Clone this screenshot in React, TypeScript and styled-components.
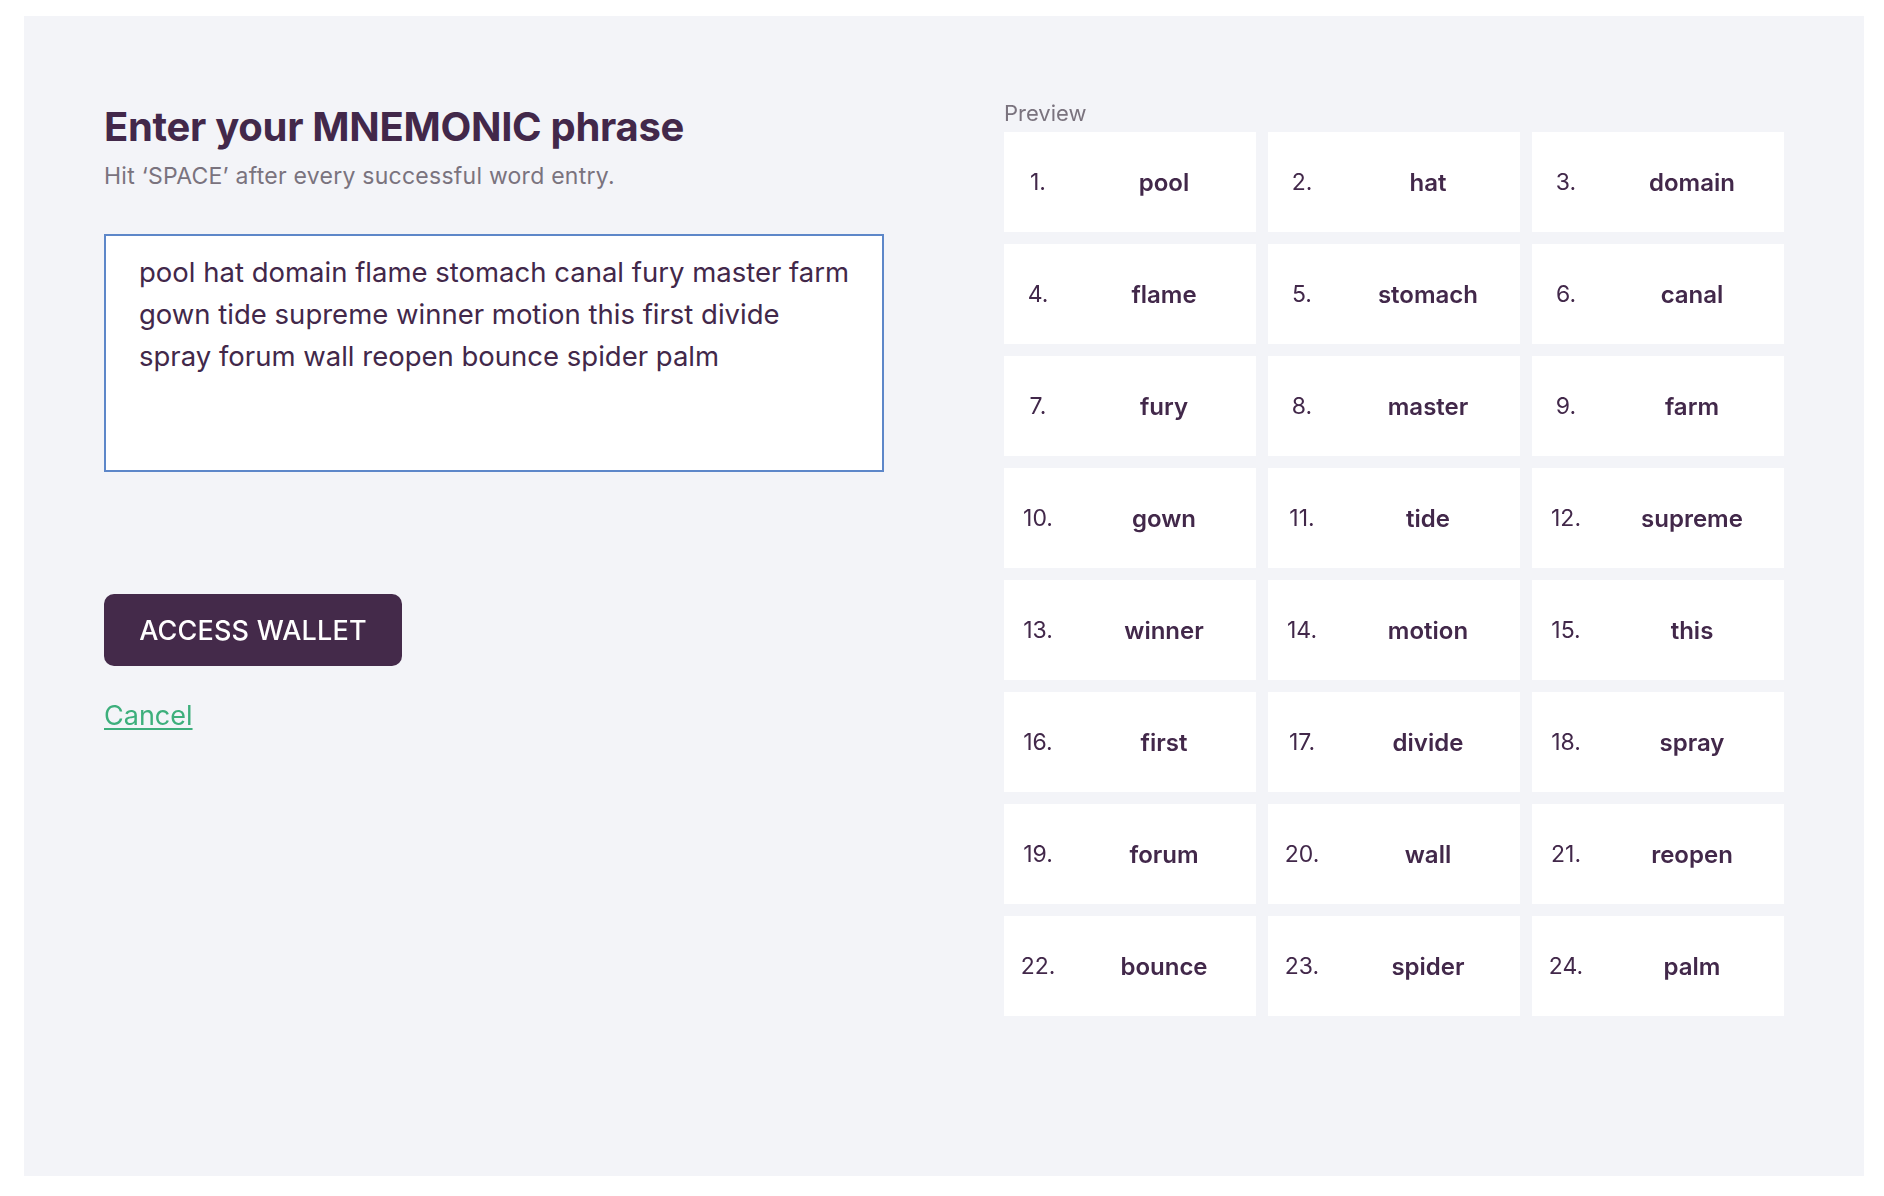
import React, { useEffect, useRef } from "react";
import styled, { createGlobalStyle } from "styled-components";

const GlobalStyle = createGlobalStyle`
  * { box-sizing: border-box; }
  html, body { margin: 0; padding: 0; background: #ffffff; }
  body { font-family: Inter, "Noto Sans", sans-serif; color: #42284a; }
`;

const Page = styled.div`
  padding: 16px 20px 20px 24px;
`;

const Panel = styled.main`
  height: 1160px;
  background: #f3f4f8;
  padding: 66px 80px 0 80px;
  display: grid;
  grid-template-columns: 780px 780px;
  column-gap: 120px;
  align-items: start;
`;

const LeftColumn = styled.section`
  display: flex;
  flex-direction: column;
  align-items: flex-start;
`;

const Title = styled.h1`
  margin: 21px 0 0 0;
  font-size: 40px;
  line-height: 48px;
  font-weight: 700;
  letter-spacing: -0.3px;
  color: #42284a;
`;

const Subtitle = styled.p`
  margin: 11px 0 0 0;
  font-size: 23px;
  line-height: 28px;
  font-weight: 400;
  letter-spacing: 0.25px;
  color: #7a737e;
`;

const PhraseInput = styled.textarea`
  margin-top: 44px;
  width: 780px;
  height: 238px;
  resize: none;
  border: 2px solid #5d87c9;
  border-radius: 0;
  background: #ffffff;
  padding: 15px 28px 15px 33px;
  font-family: Inter, "Noto Sans", sans-serif;
  font-size: 27.5px;
  line-height: 42px;
  color: #42284a;
  outline: none;
  caret-color: #42284a;
`;

const AccessButton = styled.button`
  margin-top: 122px;
  width: 298px;
  height: 72px;
  border: none;
  border-radius: 10px;
  background: #442a4a;
  color: #ffffff;
  font-family: Inter, "Noto Sans", sans-serif;
  font-size: 27px;
  font-weight: 500;
  letter-spacing: 0.2px;
  cursor: pointer;
`;

const CancelLink = styled.a`
  margin-top: 34px;
  font-size: 27px;
  line-height: 32px;
  color: #3daf7c;
  text-decoration: underline;
  text-underline-offset: 3px;
  text-decoration-thickness: 2px;
  cursor: pointer;
`;

const RightColumn = styled.section`
  display: flex;
  flex-direction: column;
`;

const PreviewLabel = styled.div`
  margin-top: 18px;
  font-size: 22px;
  line-height: 26px;
  color: #7a737e;
`;

const WordGrid = styled.div`
  margin-top: 6px;
  display: grid;
  grid-template-columns: repeat(3, 252px);
  grid-auto-rows: 100px;
  gap: 12px;
`;

const WordCell = styled.div`
  background: #ffffff;
  display: flex;
  align-items: center;
`;

const WordIndex = styled.span`
  width: 68px;
  flex: none;
  text-align: center;
  font-size: 23px;
  font-weight: 400;
  color: #42284a;
`;

const WordText = styled.span`
  flex: 1;
  text-align: center;
  font-size: 24px;
  font-weight: 600;
  color: #42284a;
`;

const words = [
  "pool", "hat", "domain", "flame", "stomach", "canal", "fury", "master",
  "farm", "gown", "tide", "supreme", "winner", "motion", "this", "first",
  "divide", "spray", "forum", "wall", "reopen", "bounce", "spider", "palm",
];

export default function App() {
  const ref = useRef<HTMLTextAreaElement>(null);
  const phrase = words.join(" ");

  useEffect(() => {
    const el = ref.current;
    if (el) {
      el.focus();
      el.setSelectionRange(phrase.length, phrase.length);
    }
  }, [phrase]);

  return (
    <>
      <GlobalStyle />
      <Page>
        <Panel>
          <LeftColumn>
            <Title>Enter your MNEMONIC phrase</Title>
            <Subtitle>Hit ‘SPACE’ after every successful word entry.</Subtitle>
            <PhraseInput ref={ref} defaultValue={phrase} spellCheck={false} />
            <AccessButton>ACCESS WALLET</AccessButton>
            <CancelLink>Cancel</CancelLink>
          </LeftColumn>
          <RightColumn>
            <PreviewLabel>Preview</PreviewLabel>
            <WordGrid>
              {words.map((w, i) => (
                <WordCell key={w + i}>
                  <WordIndex>{i + 1}.</WordIndex>
                  <WordText>{w}</WordText>
                </WordCell>
              ))}
            </WordGrid>
          </RightColumn>
        </Panel>
      </Page>
    </>
  );
}
